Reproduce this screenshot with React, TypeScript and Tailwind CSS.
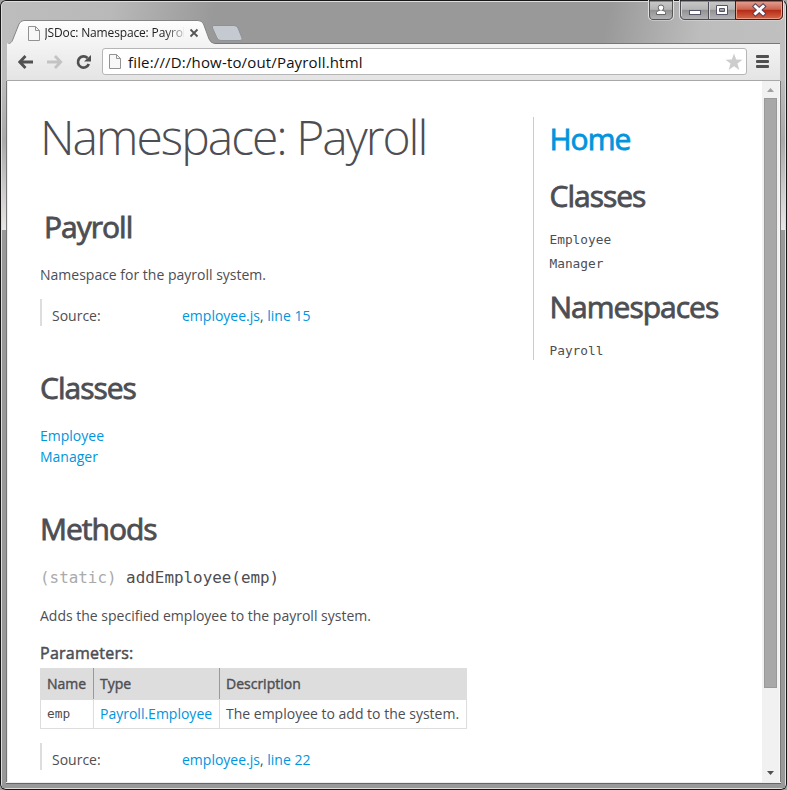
import React from "react";

const sans = "font-['Open_Sans','Liberation_Sans',sans-serif]";
const mono = "font-['DejaVu_Sans_Mono','Liberation_Mono',monospace]";
const heading = "text-[30px] leading-[40px] tracking-[-1px] whitespace-nowrap [-webkit-text-stroke:0.8px_currentColor]";

function PageIcon({ className }: { className: string }) {
  return (
    <svg className={className} width="12" height="15" viewBox="0 0 12 15" fill="#f7f7f7" stroke="#929292">
      <path d="M.5.5h7l4 4v10H.5z" />
      <path d="M7.5.5v4h4" fill="none" />
    </svg>
  );
}

function TitleBar() {
  return (
    <div className="relative h-[43px] shrink-0">
      <svg className="absolute left-0 top-0" width="787" height="44" viewBox="0 0 787 44">
        <defs>
          <linearGradient id="tab" x2="0" y2="1">
            <stop stopColor="#fdfdfd" />
            <stop offset="1" stopColor="#f3f3f3" />
          </linearGradient>
          <linearGradient id="btn" x2="0" y2="1">
            <stop stopColor="#c9c9c9" />
            <stop offset=".45" stopColor="#b5b5b5" />
            <stop offset=".5" stopColor="#929292" />
            <stop offset="1" stopColor="#b4b4b8" />
          </linearGradient>
          <linearGradient id="close" x2="0" y2="1">
            <stop stopColor="#e2a395" />
            <stop offset=".45" stopColor="#cd6350" />
            <stop offset=".5" stopColor="#b52c16" />
            <stop offset="1" stopColor="#d8694c" />
          </linearGradient>
        </defs>
        <path d="M213 43.5H780" stroke="#777" />
        <path d="M7 44.5C11 43 12 42 13 39L19 24Q20.500 20.500 24 20.500H198Q202 20.500 203.500 24L209 39Q211 43.500 215 43.500V44.500Z" fill="url(#tab)" stroke="#858585" />
        <path d="M8 44.500H216" stroke="#f3f3f3" />
        <path d="M214 25.500H234Q237 25.500 238 28L242 38Q243 40.500 240 40.500H221Q218 40.500 217 38L212.500 28Q211.500 25.500 214 25.500Z" fill="#c5cad1" stroke="#8e9196" />
        <path d="M190.500 29.500l7 7m0-7l-7 7" stroke="#555" strokeWidth="1.8" />
        <path d="M648.500 0V16Q648.500 20 652 20H669Q673.500 20 673.500 16V0M679.500 0V16Q679.500 20 684 20H779Q783.500 20 783.500 16V0" fill="none" stroke="#e0e0e0" />
        <path d="M649.500 1V15Q649.500 19.500 653 19.500H668Q672.500 19.500 672.500 15V1Z" fill="url(#btn)" stroke="#555" />
        <path d="M680.500 1V15Q680.500 19.500 685 19.500H735.500V1Z" fill="url(#btn)" stroke="#4c4c55" />
        <path d="M708.500 2V19" stroke="#4c4c55" />
        <path d="M709.500 2V19M681.500 2V16" stroke="#d4d4d4" />
        <path d="M735.500 1V19.500H778Q782.500 19.500 782.500 15V1Z" fill="url(#close)" stroke="#4b1712" />
        <path d="M736.500 2V18.500H777Q781.500 18.500 781.500 14V2" fill="none" stroke="#e99b85" />
        <path d="M656.500 14.500V12.500Q657 10.500 659.500 10.500H662.500Q665.500 10.500 665.500 12.500V14.500Z" fill="#fff" stroke="#666" />
        <circle cx="661" cy="7.800" r="2.800" fill="#fff" stroke="#666" />
        <path d="M660 10.500H662V12H660Z" fill="#fff" />
        <rect x="689.5" y="10.5" width="11" height="4" fill="#fff" stroke="#555568" />
        <path d="M716.500 5.500H727.500V14.500H716.500ZM719.500 8.500V11.500H724.500V8.500Z" fill="#fff" fillRule="evenodd" stroke="#555568" />
        <path d="M755.500 6.500L763 13.500M763 6.500L755.500 13.500" stroke="#57435a" strokeWidth="5" strokeLinecap="square" />
        <path d="M755.500 6.500L763 13.500M763 6.500L755.500 13.500" stroke="#fff" strokeWidth="3" strokeLinecap="square" />
      </svg>
      <div className="relative flex pl-[28px] pt-[25px]">
        <PageIcon className="mt-[1px] shrink-0" />
        <div className="ml-[4.500px] h-[18px] w-[139px] whitespace-nowrap text-[12px] leading-[16px] tracking-[-0.150px] text-[#222] [mask-image:linear-gradient(90deg,#000_86%,transparent_104%)]">
          JSDoc: Namespace: Payrol
        </div>
      </div>
    </div>
  );
}

function Toolbar() {
  return (
    <div className="ml-[7px] mr-[7px] flex h-[38px] shrink-0 items-center border-b border-[#a8a8a8] bg-linear-to-b from-[#f4f4f4] to-[#e4e4e4] pl-[11px]">
      <svg className="shrink-0" width="77" height="20" viewBox="0 0 77 20" fill="none" strokeWidth="2.800">
        <path d="M15 10H2M7.500 4L1.800 10L7.500 16" stroke="#505050" />
        <path d="M29 10H42M37 4L42.700 10L37 16" stroke="#c3c3c3" />
        <path d="M69.500 6A5.600 5.600 0 1 0 70.800 12" stroke="#505050" strokeWidth="2.700" />
        <path d="M73 3V9.500H66Z" fill="#505050" />
      </svg>
      <div className="ml-[7px] flex h-[27px] w-[645px] shrink-0 items-center rounded-[3px] border border-[#b5b5b5] bg-white px-[6px]">
        <PageIcon className="shrink-0" />
        <span className="ml-[7px] whitespace-nowrap text-[15px] leading-[24px] tracking-[0.160px] text-[#111]">file:///D:/how-to/out/Payroll.html</span>
        <svg className="ml-auto -mr-[3px]" width="18" height="18" viewBox="0 0 18 18" fill="#cdcdcd">
          <path d="M9 .5L11.200 6.500L17.500 6.700L12.500 10.600L14.300 17L9 13.300L3.700 17L5.500 10.600L.5 6.700L6.800 6.500Z" />
        </svg>
      </div>
      <div className="ml-[9px] flex flex-col gap-[2px]">
        <span className="h-[3px] w-[13px] rounded-[1px] bg-[#505050]" />
        <span className="h-[3px] w-[13px] rounded-[1px] bg-[#505050]" />
        <span className="h-[3px] w-[13px] rounded-[1px] bg-[#505050]" />
      </div>
    </div>
  );
}

function Source({ line }: { line: number }) {
  return (
    <div className="flex h-[27px] border-l-2 border-[#ddd] pl-[10px] pt-[6px] leading-[21px]">
      <span className="w-[130px]">Source:</span>
      <span><a className="text-[#0095dd]">employee.js</a>, <a className="text-[#0095dd]">line {line}</a></span>
    </div>
  );
}

function MainContent() {
  return (
    <main className="w-[493px] shrink-0 pl-[32px] text-[14px] leading-[21px]">
      <h1 className="mt-[23px] whitespace-nowrap text-[48px] font-light leading-[65px] tracking-[-2px]">Namespace: Payroll</h1>
      <h2 className={`mt-[38px] pl-[4px] ${heading}`}>Payroll</h2>
      <p className="mt-[17px]">Namespace for the payroll system.</p>
      <div className="mt-[14px]"><Source line={15} /></div>
      <h2 className={`mt-[42px] ${heading}`}>Classes</h2>
      <div className="mt-[17px] text-[#0095dd]">
        <p>Employee</p>
        <p>Manager</p>
      </div>
      <h2 className={`mt-[42px] ${heading}`}>Methods</h2>
      <h4 className={`mt-[17px] whitespace-nowrap text-[15.900px] leading-[24px] ${mono}`}>
        <span className="text-[#aaa]">(static)</span> addEmployee(emp)
      </h4>
      <p className="mt-[15px]">Adds the specified employee to the payroll system.</p>
      <h5 className="mt-[15px] text-[16px] leading-[24px] tracking-[0.250px] [-webkit-text-stroke:0.500px_currentColor]">Parameters:</h5>
      <table className="mt-[3px] w-[427px] table-fixed border-collapse text-left">
        <colgroup>
          <col className="w-[53px]" />
          <col className="w-[126px]" />
          <col />
        </colgroup>
        <thead>
          <tr className="h-[31px] bg-[#ddd] [-webkit-text-stroke:0.400px_currentColor]">
            <th className="border border-[#ddd] border-r-[#999] px-[6px] pb-[2px] font-normal">Name</th>
            <th className="border border-[#ddd] border-r-[#999] px-[6px] pb-[2px] font-normal">Type</th>
            <th className="border border-[#ddd] px-[6px] pb-[2px] font-normal">Description</th>
          </tr>
        </thead>
        <tbody>
          <tr className="h-[29px]">
            <td className={`border border-[#ddd] px-[6px] pb-[2px] text-[12.800px] ${mono}`}>emp</td>
            <td className="border border-[#ddd] px-[6px] pb-[2px] text-[#0095dd]">Payroll.Employee</td>
            <td className="whitespace-nowrap border border-[#ddd] px-[6px] pb-[2px]">The employee to add to the system.</td>
          </tr>
        </tbody>
      </table>
      <div className="mt-[14px]"><Source line={22} /></div>
    </main>
  );
}

function SideNav() {
  return (
    <nav className="ml-[32px] mt-[36px] h-[243px] w-[228px] shrink-0 border-l border-[#ccc] pl-[15.500px]">
      <h2 className={`mt-[2px] text-[#0095dd] ${heading}`}>Home</h2>
      <h2 className={`mt-[17px] ${heading}`}>Classes</h2>
      <ul className={`mt-[12px] text-[12.800px] leading-[24px] ${mono}`}>
        <li>Employee</li>
        <li>Manager</li>
      </ul>
      <h2 className={`mt-[11px] ${heading}`}>Namespaces</h2>
      <p className={`mt-[12px] text-[12.800px] leading-[24px] ${mono}`}>Payroll</p>
    </nav>
  );
}

function Scrollbar() {
  return (
    <div className="flex w-[17px] shrink-0 flex-col items-center bg-[#f1f1f1]">
      <svg className="shrink-0" width="17" height="17" viewBox="0 0 17 17" fill="#a0a0a0"><path d="M5 11L8.500 7L12 11Z" /></svg>
      <div className="h-[590px] w-[13px] shrink-0 border border-[#999] bg-[#a8a8a8]" />
      <svg className="mt-auto shrink-0" width="17" height="17" viewBox="0 0 17 17" fill="#505050"><path d="M5 6L8.500 10L12 6Z" /></svg>
    </div>
  );
}

export default function App() {
  return (
    <div className="h-[790px] w-[787px] overflow-hidden bg-[#a0a0a0]">
      <div className={`flex h-full flex-col overflow-hidden rounded-[6px] bg-[linear-gradient(100deg,#bdbdbd_0,#b9b9b9_14%,#999_27%,#999_76%,#bdbdbd_88%,#c0c0c0_100%)] bg-[length:787px_90px] bg-no-repeat shadow-[inset_0_0_0_1px_#171717,inset_0_0_0_2px_#ddd] ${sans}`}>
        <TitleBar />
        <Toolbar />
        <div className="flex h-[701px] shrink-0 bg-[linear-gradient(#bcbcbc_0,#aaa_60px,#e8e6e5_149px,#999_149px)] px-[2px] shadow-[inset_1px_0_#171717,inset_-1px_0_#171717,inset_2px_0_#ddd,inset_-2px_0_#ddd]">
          <div className="-mr-px ml-[4px] flex w-[775px] border-x border-[#777] bg-white text-[#4d4e53]">
            <div className="flex min-w-0 flex-1 border-l border-[#eee]">
              <MainContent />
              <SideNav />
            </div>
            <Scrollbar />
            <div className="w-px shrink-0 bg-[#f8f8f8]" />
          </div>
        </div>
        <div className="mx-[2px] mb-[2px] flex-1 bg-[#999] px-[4px]">
          <div className="h-[2px] border-b border-[#666] bg-[#eee]" />
        </div>
      </div>
    </div>
  );
}
